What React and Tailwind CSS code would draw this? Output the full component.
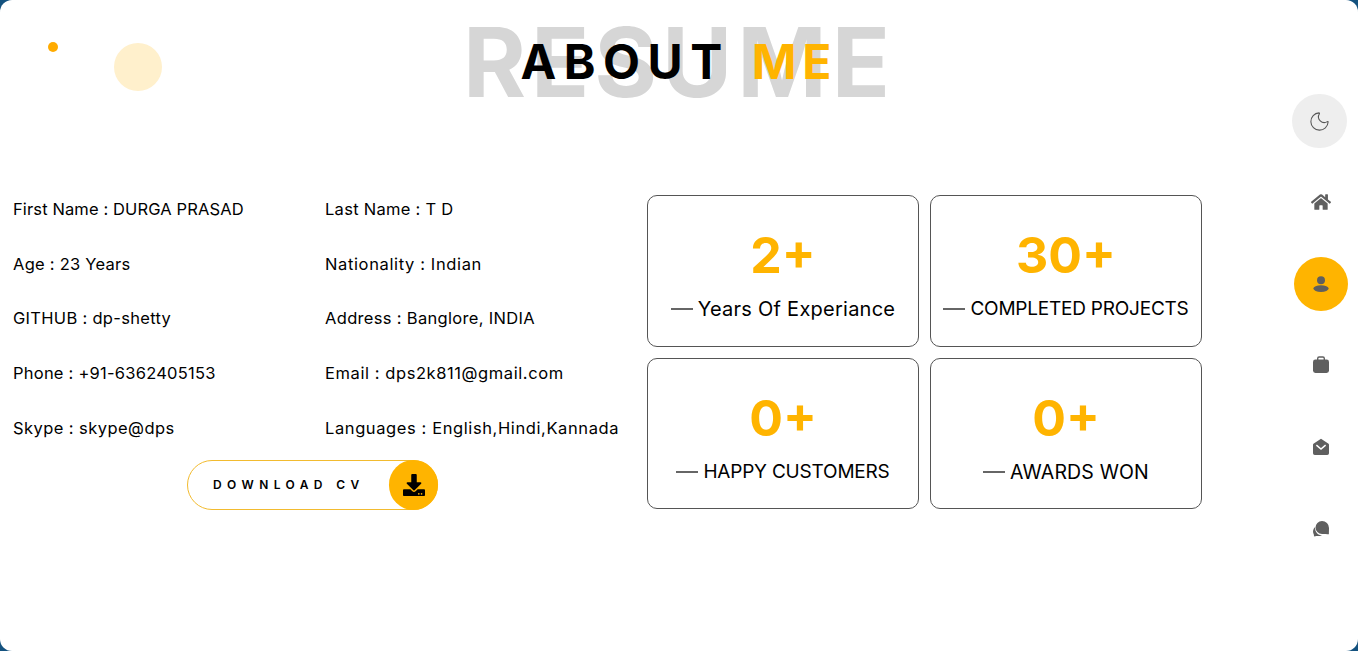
import React from "react";
import { FaDownload, FaHome } from "react-icons/fa";
import { Moon } from "lucide-react";

const left = [
  ["First Name : DURGA PRASAD", "tracking-[0.12px]"],
  ["Age : 23 Years", "tracking-[0.25px]"],
  ["GITHUB : dp-shetty", "tracking-[0.3px]"],
  ["Phone : +91-6362405153", "tracking-[0.23px]"],
  ["Skype : skype@dps", "tracking-[0.43px]"],
];
const right = [
  ["Last Name : T D", "tracking-[0.28px]"],
  ["Nationality : Indian", "tracking-[0.63px]"],
  ["Address : Banglore, INDIA", "tracking-[0.32px]"],
  ["Email : dps2k811@gmail.com", "tracking-[0.58px]"],
  ["Languages : English,Hindi,Kannada", "tracking-[0.6px]"],
];
const cards = [
  ["2+", "Years Of Experiance", "text-[20px] tracking-[0.25px]"],
  ["30+", "COMPLETED PROJECTS", "text-[19px] tracking-[-0.22px]"],
  ["0+", "HAPPY CUSTOMERS", "text-[19px] tracking-[-0.2px]"],
  ["0+", "AWARDS WON", "text-[19.5px] tracking-[0.15px]"],
];

function UserIcon() {
  return (
    <svg width="18" height="18" viewBox="0 0 18 18" fill="#5f5f5f">
      <circle cx="9" cy="5.2" r="4" />
      <ellipse cx="9" cy="13.6" rx="7.6" ry="3.4" />
    </svg>
  );
}
function CaseIcon() {
  return (
    <svg width="18" height="18" viewBox="0 0 18 18" fill="none">
      <rect x="5.7" y="1" width="6.6" height="5" rx="1.4" stroke="#5f5f5f" strokeWidth="1.4" />
      <rect x="1" y="3.6" width="16" height="13.4" rx="2.4" fill="#5f5f5f" />
    </svg>
  );
}
function MailIcon() {
  return (
    <svg width="18" height="18" viewBox="0 0 18 18">
      <path d="M9 .8 16.2 5.4a1.6 1.6 0 0 1 .8 1.4v8.4a1.8 1.8 0 0 1-1.8 1.8H2.8A1.8 1.8 0 0 1 1 15.2V6.8a1.6 1.6 0 0 1 .8-1.4Z" fill="#5f5f5f" />
      <path d="M4.4 7.2 9 11l4.6-3.8" fill="none" stroke="#fff" strokeWidth="1.5" />
    </svg>
  );
}
function ChatIcon() {
  return (
    <svg width="18" height="18" viewBox="0 0 18 18" fill="#5f5f5f">
      <path d="M10 1a7 7 0 0 1 7 7c0 1.8-.1 4.600-.1 6.300-1.500-.1-4.800-.3-6.900-.3a6.500 6.500 0 0 1 0-13Z" />
      <path d="M3.100 7c-2 2-2.500 4.500-1.700 6.600.3.800.6 1.100.6 2.800 1.500-.3 2.200-.6 3.300-.5 1.600.4 3.200.3 4.700-.6-3.200.2-7.300-2.500-6.900-8.300Z" />
    </svg>
  );
}

function NavItem({ children, active }) {
  return (
    <div className="h-[81.6px] flex items-center justify-center">
      <div className={`w-[54px] h-[54px] rounded-full flex items-center justify-center ${active ? "bg-[#ffb400]" : ""}`}>
        {children}
      </div>
    </div>
  );
}

export default function App() {
  return (
    <div className="h-[651px] w-[1358px] bg-[#14527f] overflow-hidden font-['Inter','Liberation_Sans',sans-serif]">
      <div className="relative h-full w-full bg-white rounded-[12px] flex">
        <div className="absolute left-[48px] top-[42px] w-[10px] h-[10px] rounded-full bg-[#ffab00]" />
        <div className="absolute left-[114px] top-[43px] w-[48px] h-[48px] rounded-full bg-[#fff0cc]" />

        <main className="w-[1270px] shrink-0">
          <header className="relative h-[125px] flex justify-center pl-[88px]">
            <div className="text-[96px] leading-[125px] font-bold text-[#d6d6d6] tracking-[5px]">RESUME</div>
            <h1 className="absolute left-[88px] right-0 top-[27px] text-center text-[48px] leading-[70px] font-bold tracking-[7.5px] text-black">
              ABOUT <span className="text-[#ffb400] ml-[3px] tracking-[6px]">ME</span>
            </h1>
          </header>

          <section className="flex pt-[70px] pl-[13px]">
            <div className="w-[634px] shrink-0 pt-[2px]">
              <div className="grid grid-cols-[312px_1fr] text-[16.5px] leading-[24px] text-black">
                <div className="flex flex-col gap-[30.7px]">
                  {left.map(([t, c]) => <p key={t} className={`whitespace-nowrap ${c}`}>{t}</p>)}
                </div>
                <div className="flex flex-col gap-[30.7px]">
                  {right.map(([t, c]) => <p key={t} className={`whitespace-nowrap ${c}`}>{t}</p>)}
                </div>
              </div>
              <div className="flex justify-center pt-[20px] pr-[35px]">
                <div className="w-[251px] h-[50px] rounded-full border border-[#f2bb2f] flex items-center justify-between pl-[25px] relative">
                  <span className="text-[12px] font-semibold tracking-[5.4px] text-black whitespace-nowrap">DOWNLOAD CV</span>
                  <div className="absolute right-[-1px] top-[-1px] w-[49px] h-[50px] rounded-full bg-[#ffb400] flex items-center justify-center text-black">
                    <FaDownload size={22} />
                  </div>
                </div>
              </div>
            </div>
            <div className="grid grid-cols-[272px_272px] grid-rows-[152px_151px] gap-[11px]">
              {cards.map(([n, l, c]) => (
                <div key={l} className="rounded-[10px] border border-[#555555] flex flex-col items-center justify-start pt-[24px]">
                  <div className="text-[50px] leading-[70px] font-bold text-[#ffb400]">{n}</div>
                  <div className={`flex items-center leading-[30px] text-black mt-[4px] whitespace-nowrap ${c}`}>
                    <span className="w-[22px] h-[1.5px] bg-[#666666] mr-[5px]" />
                    {l}
                  </div>
                </div>
              ))}
            </div>
          </section>
        </main>

        <nav className="w-[88px] pt-[94px] pl-[24px] pr-[10px] flex flex-col">
          <div className="w-[55px] h-[54px] -ml-[2px] mb-[13.5px] rounded-full bg-[#eeeeee] flex items-center justify-center shrink-0">
            <Moon size={23} strokeWidth={1.1} color="#555" />
          </div>
          <NavItem><FaHome size={20} color="#5f5f5f" /></NavItem>
          <NavItem active><UserIcon /></NavItem>
          <NavItem><CaseIcon /></NavItem>
          <NavItem><MailIcon /></NavItem>
          <NavItem><ChatIcon /></NavItem>
        </nav>
      </div>
    </div>
  );
}
